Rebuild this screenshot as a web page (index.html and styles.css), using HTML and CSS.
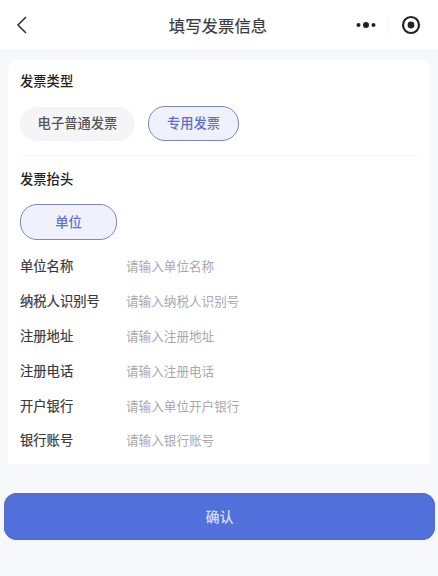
FILE: index.html
```html
<!DOCTYPE html>
<html lang="zh">
<head>
  <meta charset="UTF-8">
  <meta name="viewport" content="width=device-width, initial-scale=1.0">
  <title>填写发票信息</title>
  <link rel="stylesheet" href="styles.css">
</head>
<body>

  <div class="navbar">
    <div class="nav-left">
      <svg width="14" height="20" viewBox="0 0 14 20">
        <path d="M11 2 L3 10 L11 18" fill="none" stroke="#333" stroke-width="1.6"/>
      </svg>
    </div>
    <h1>填写发票信息</h1>
    <div class="capsule">
      <svg width="20" height="8" viewBox="0 0 20 8">
        <circle cx="2.5" cy="4" r="2" fill="#222"/>
        <circle cx="10" cy="4" r="3" fill="#222"/>
        <circle cx="17.5" cy="4" r="2" fill="#222"/>
      </svg>
      <span class="divider"></span>
      <svg width="20" height="20" viewBox="0 0 20 20">
        <circle cx="10" cy="10" r="8" fill="none" stroke="#222" stroke-width="2.2"/>
        <circle cx="10" cy="10" r="3.4" fill="#222"/>
      </svg>
    </div>
  </div>

  <div class="card">
    <p class="section-title">发票类型</p>
    <div class="options">
      <span class="pill">电子普通发票</span>
      <span class="pill active">专用发票</span>
    </div>
    <div class="line"></div>

    <p class="section-title">发票抬头</p>
    <div class="options">
      <span class="pill active wide">单位</span>
    </div>

    <div class="rows">
      <div class="row"><label>单位名称</label><span>请输入单位名称</span></div>
      <div class="row"><label>纳税人识别号</label><span>请输入纳税人识别号</span></div>
      <div class="row"><label>注册地址</label><span>请输入注册地址</span></div>
      <div class="row"><label>注册电话</label><span>请输入注册电话</span></div>
      <div class="row"><label>开户银行</label><span>请输入单位开户银行</span></div>
      <div class="row"><label>银行账号</label><span>请输入银行账号</span></div>
    </div>
  </div>

  <div class="confirm">确认</div>

</body>
</html>
```
FILE: styles.css
```css
*{
  margin: 0;
  padding: 0;
  box-sizing: border-box;
  font-family: "Liberation Sans", "Noto Sans CJK SC", sans-serif;
}
html, body{
  height: 100%;
}
body{
  background: #f7f8fb;
  overflow: hidden;
}
.navbar{
  height: 49px;
  background: #fff;
  display: grid;
  grid-template-columns: 1fr auto 1fr;
  align-items: center;
  padding: 0 17px 0 15px;
}
.nav-left{
  display: flex;
}
.navbar h1{
  text-align: center;
  font-size: 16.4px;
  font-weight: 400;
  color: #3c3c3c;
  -webkit-text-stroke: 0.2px #3c3c3c;
}
.capsule{
  display: flex;
  align-items: center;
  justify-content: flex-end;
  gap: 12px;
}
.divider{
  width: 1px;
  height: 20px;
  background: #f5f5f5;
}
.card{
  margin: 11px 8px 0;
  height: 404px;
  background: #fff;
  border-radius: 10px 10px 0 0;
  padding: 13px 12px 0;
}
.section-title{
  font-size: 13.3px;
  line-height: 18px;
  font-weight: 500;
  color: #222;
}
.options{
  display: flex;
  gap: 13px;
  margin-top: 16px;
}
.pill{
  height: 34px;
  line-height: 34px;
  width: 115px;
  border-radius: 17px;
  background: #f5f5f7;
  color: #555;
  font-size: 13.3px;
  font-weight: 500;
  text-align: center;
}
.pill.active{
  width: 91px;
  height: 35px;
  line-height: 33px;
  margin-top: -1px;
  background: #eff2fd;
  border: 1px solid #7d86b4;
  color: #6270c8;
}
.pill.wide{
  width: 97px;
  height: 36px;
  line-height: 35px;
}
.line{
  height: 1px;
  background: #f5f5f6;
  margin: 14px 0 15px;
}
.rows{
  margin-top: 8px;
}
.row{
  height: 34.9px;
  display: flex;
  align-items: center;
}
.row label{
  width: 106px;
  font-size: 13.3px;
  color: #3a3a3a;
  font-weight: 400;
  -webkit-text-stroke: 0.2px #3a3a3a;
}
.row span{
  font-size: 12.6px;
  color: #a8a8ab;
}
.confirm{
  margin: 29px 3px 0 4px;
  height: 47px;
  line-height: 49px;
  border-radius: 13px;
  background: #5270dc;
  box-shadow: inset 0 0 0 1px #5a6cc4;
  color: #d6def8;
  font-size: 14px;
  font-weight: 500;
  text-align: center;
}
```
